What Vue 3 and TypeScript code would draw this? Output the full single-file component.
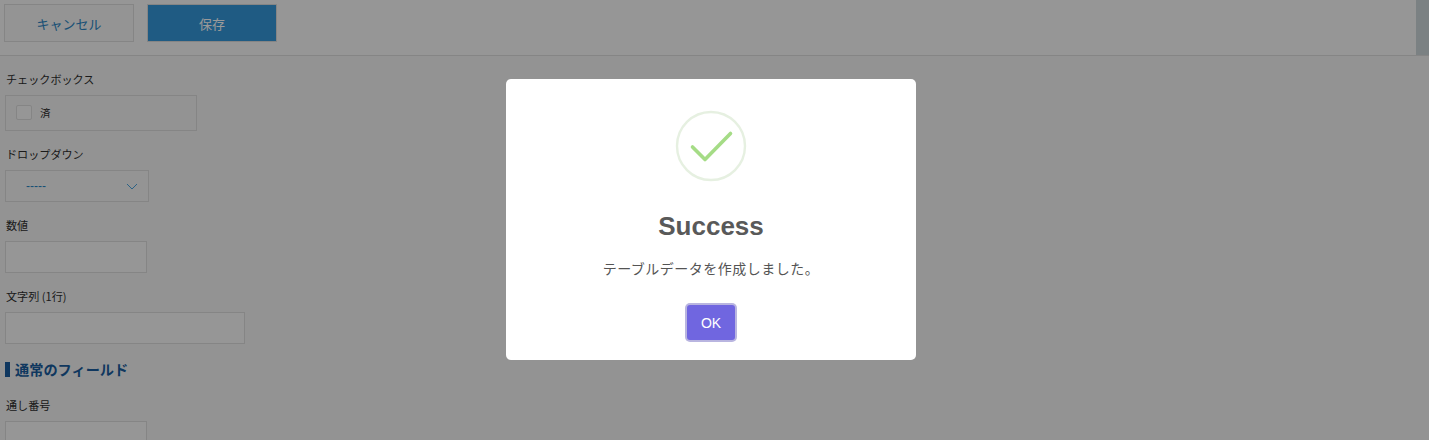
<script setup lang="ts">
const title: string = 'Success'
const message: string = 'テーブルデータを作成しました。'
</script>

<template>
  <div class="page">
    <header class="toolbar">
      <button class="btn cancel">キャンセル</button>
      <button class="btn save">保存</button>
      <div class="thumb"></div>
    </header>
    <main class="form">
      <div class="field f-check">
        <div class="label">チェックボックス</div>
        <div class="checkbox-box"><span class="box"></span><span class="check-text">済</span></div>
      </div>
      <div class="field f-drop">
        <div class="label">ドロップダウン</div>
        <div class="select">
          <span class="select-text">-----</span>
          <svg class="chev" width="12" height="7" viewBox="0 0 12 7"><path d="M1 1l5 5 5-5" fill="none" stroke="#3498db" stroke-width="0.9" /></svg>
        </div>
      </div>
      <div class="field f-num">
        <div class="label">数値</div>
        <div class="input short"></div>
      </div>
      <div class="field f-str">
        <div class="label">文字列 (1行)</div>
        <div class="input long"></div>
      </div>
      <h2 class="section">通常のフィールド</h2>
      <div class="field f-seq">
        <div class="label">通し番号</div>
        <div class="input short"></div>
      </div>
    </main>
    <div class="overlay">
      <div class="modal">
        <svg class="icon" width="72" height="72" viewBox="0 0 72 72">
          <circle cx="36" cy="36" r="34" fill="none" stroke="#e6f0e1" stroke-width="2.4" />
          <path d="M17.500 37L30 49.500L55.500 23.500" fill="none" stroke="#a5dc86" stroke-width="3.600" stroke-linecap="round" stroke-linejoin="round" />
        </svg>
        <div class="title">{{ title }}</div>
        <div class="message">{{ message }}</div>
        <button class="ok">OK</button>
      </div>
    </div>
  </div>
</template>

<style>
html, body { margin: 0; overflow: hidden; }
</style>

<style scoped>
.page {
  position: relative;
  height: 440px;
  overflow: hidden;
  background: #f5f5f5;
  font-family: "Liberation Sans", "Noto Sans CJK JP", sans-serif;
  color: #2e2e2e;
}
.toolbar {
  position: relative;
  display: flex;
  gap: 13px;
  height: 56px;
  box-sizing: border-box;
  padding: 4px 0 0 4px;
  background: #fbfbfb;
  border-bottom: 1px solid #dedede;
}
.btn {
  width: 130px;
  height: 38px;
  box-sizing: border-box;
  font: 13px "Noto Sans CJK JP", sans-serif;
  padding: 0;
}
.cancel { background: #f7f7f7; border: 1px solid #dedede; color: #2a85c4; }
.save { background: #3498db; border: 1px solid #dedede; color: #fff; }
.thumb {
  position: absolute;
  top: 0;
  right: 0;
  width: 13px;
  height: 55px;
  background: #cdd7da;
}
.form { padding: 0 0 0 5px; }
.label {
  font: 11.100px/16px "Noto Sans CJK JP", sans-serif;
  margin-left: 1px;
}
.field { display: flex; flex-direction: column; align-items: flex-start; }
.f-check { padding-top: 15px; }
.checkbox-box {
  display: flex;
  align-items: center;
  width: 192px;
  height: 36px;
  box-sizing: border-box;
  margin-top: 8px;
  border: 1px solid #dedede;
  padding: 0 0 2px 10px;
}
.box {
  width: 16px;
  height: 15px;
  box-sizing: border-box;
  border: 1px solid #dedede;
  border-radius: 2px;
  background: #fafafa;
}
.check-text { margin-left: 8px; font: 10.500px "Noto Sans CJK JP", sans-serif; }
.f-drop { margin-top: 15px; }
.select {
  display: flex;
  align-items: center;
  justify-content: space-between;
  width: 144px;
  height: 32px;
  box-sizing: border-box;
  margin-top: 8px;
  padding: 0 10px 0 20px;
  background: #f7f7f7;
  border: 1px solid #dedede;
}
.select-text { font: 12px "Liberation Sans", sans-serif; color: #2a85c4; }
.f-num { margin-top: 15px; }
.f-str { margin-top: 15px; }
.input {
  height: 32px;
  box-sizing: border-box;
  margin-top: 8px;
  background: #fafafa;
  border: 1px solid #dedede;
}
.short { width: 142px; }
.long { width: 240px; }
.section {
  margin: 18px 0 0;
  height: 15px;
  padding-left: 5px;
  border-left: 5px solid #195d9e;
  font: bold 14.200px/15px "Noto Sans CJK JP", sans-serif;
  color: #195d9e;
}
.f-seq { margin-top: 20px; }
.overlay {
  position: absolute;
  inset: 0;
  display: flex;
  align-items: flex-start;
  justify-content: center;
  padding-right: 7px;
  background: rgba(0, 0, 0, 0.4);
}
.modal {
  display: flex;
  flex-direction: column;
  align-items: center;
  width: 410px;
  height: 281px;
  box-sizing: border-box;
  margin-top: 79px;
  padding-top: 31px;
  background: #fff;
  border-radius: 5px;
}
.icon { display: block; }
.title {
  margin-top: 26px;
  font: bold 26px/36px "Liberation Sans", sans-serif;
  color: #595959;
}
.message {
  margin-top: 14px;
  font: 14px/20px "Noto Sans CJK JP", sans-serif;
  letter-spacing: 0.5px;
  color: #545454;
}
.ok {
  margin-top: 27px;
  width: 48px;
  height: 35px;
  box-sizing: border-box;
  border: none;
  border-radius: 3px;
  background: #7066e0;
  color: #fff;
  font: 14px "Liberation Sans", sans-serif;
  box-shadow: 0 0 0 2px #b9b5e0;
  padding: 0;
}
</style>
